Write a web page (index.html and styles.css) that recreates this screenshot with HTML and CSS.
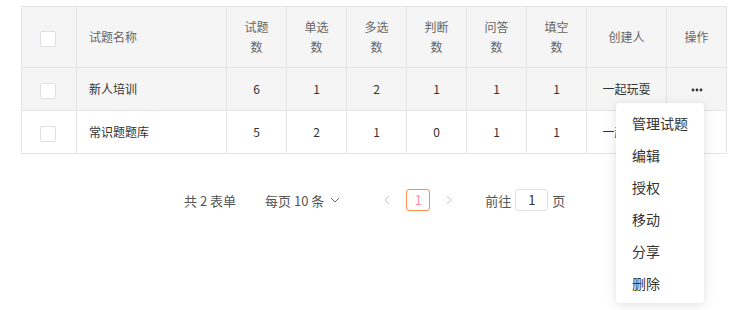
FILE: index.html
```html
<!DOCTYPE html>
<html lang="zh">
<head>
    <meta charset="utf-8">
    <title>试题库列表</title>
    <link rel="stylesheet" href="styles.css">
</head>
<body>
    <div class="page">
        <table class="bank-table">
            <colgroup>
                <col style="width:55px">
                <col style="width:150px">
                <col style="width:60px">
                <col style="width:60px">
                <col style="width:60px">
                <col style="width:60px">
                <col style="width:60px">
                <col style="width:60px">
                <col style="width:80px">
                <col style="width:60px">
            </colgroup>
            <thead>
                <tr>
                    <th><span class="check"></span></th>
                    <th class="name">试题名称</th>
                    <th>试题<br>数</th>
                    <th>单选<br>数</th>
                    <th>多选<br>数</th>
                    <th>判断<br>数</th>
                    <th>问答<br>数</th>
                    <th>填空<br>数</th>
                    <th>创建人</th>
                    <th>操作</th>
                </tr>
            </thead>
            <tbody>
                <tr class="hover">
                    <td><span class="check"></span></td>
                    <td class="name">新人培训</td>
                    <td>6</td>
                    <td>1</td>
                    <td>2</td>
                    <td>1</td>
                    <td>1</td>
                    <td>1</td>
                    <td>一起玩耍</td>
                    <td>
                        <svg class="more" width="12" height="4" viewBox="0 0 12 4">
                            <circle cx="2" cy="2" r="1.4" fill="#333"/>
                            <circle cx="6" cy="2" r="1.4" fill="#333"/>
                            <circle cx="10" cy="2" r="1.4" fill="#333"/>
                        </svg>
                    </td>
                </tr>
                <tr>
                    <td><span class="check"></span></td>
                    <td class="name">常识题题库</td>
                    <td>5</td>
                    <td>2</td>
                    <td>1</td>
                    <td>0</td>
                    <td>1</td>
                    <td>1</td>
                    <td>一起玩耍</td>
                    <td></td>
                </tr>
            </tbody>
        </table>

        <div class="pager">
            <span class="total">共 2 表单</span>
            <span class="sizes"><span class="sizes-text">每页 10 条</span><svg width="10" height="6" viewBox="0 0 10 6"><path d="M1 1l4 4 4-4" fill="none" stroke="#666" stroke-width="1"/></svg></span>
            <span class="arrow">
                <svg width="6" height="10" viewBox="0 0 6 10"><path d="M5 1L1 5l4 4" fill="none" stroke="#c0c4cc" stroke-width="1"/></svg>
            </span>
            <span class="num">1</span>
            <span class="arrow">
                <svg width="6" height="10" viewBox="0 0 6 10"><path d="M1 1l4 4-4 4" fill="none" stroke="#c0c4cc" stroke-width="1"/></svg>
            </span>
            <span class="jump">前往 <span class="jump-box">1</span> 页</span>
        </div>

        <ul class="menu">
            <li>管理试题</li>
            <li>编辑</li>
            <li>授权</li>
            <li>移动</li>
            <li>分享</li>
            <li>删除</li>
        </ul>
    </div>
</body>
</html>
```

FILE: styles.css
```css
body {
    margin: 0;
    padding: 0;
    background: #fff;
    font-family: "Noto Sans CJK SC", "Microsoft YaHei", sans-serif;
    color: #333;
}
.page {
    position: relative;
    min-height: 304px;
    padding: 6px 0 0 21px;
}
.bank-table {
    border-collapse: collapse;
    table-layout: fixed;
    width: 706px;
    font-size: 12px;
}
.bank-table th,
.bank-table td {
    border: 1px solid #e4e4e4;
    text-align: center;
    padding: 0;
}
.bank-table th {
    height: 60px;
    background: #f5f5f5;
    color: #666;
    font-weight: normal;
    line-height: 20px;
}
.bank-table td {
    height: 42px;
    line-height: 20px;
}
.bank-table tr.hover td {
    background: #f5f5f5;
}
.bank-table .name {
    text-align: left;
    padding-left: 12px;
}
.check {
    display: inline-block;
    width: 14px;
    height: 14px;
    border: 1px solid #dcdfe6;
    border-radius: 2px;
    background: #fff;
    vertical-align: middle;
    margin-left: -2px;
}
.more {
    display: inline-block;
    vertical-align: middle;
    margin-top: -2px;
}
.pager {
    display: flex;
    align-items: center;
    margin-top: 35px;
    padding-left: 163px;
    font-size: 13px;
    color: #555;
    height: 22px;
}
.total {
    margin-right: 29px;
    white-space: pre;
}
.sizes {
    display: flex;
    align-items: center;
    gap: 6px;
    margin-right: 44px;
}
.sizes-text {
    white-space: pre;
}
.arrow {
    display: flex;
    align-items: center;
}
.num {
    width: 22px;
    height: 20px;
    line-height: 20px;
    border: 1px solid #ff8a4c;
    border-radius: 3px;
    color: #f78fa7;
    text-align: center;
    margin: 0 16px;
}
.jump {
    margin-left: 33px;
    display: flex;
    align-items: center;
    gap: 4px;
}
.jump-box {
    width: 31px;
    height: 20px;
    line-height: 20px;
    border: 1px solid #dcdfe6;
    border-radius: 3px;
    text-align: center;
    color: #333;
}
.menu {
    position: absolute;
    left: 616px;
    top: 103px;
    width: 88px;
    margin: 0;
    padding: 4px 0 4px;
    list-style: none;
    background: #fff;
    border-radius: 4px;
    box-shadow: 0 2px 12px rgba(0, 0, 0, 0.12);
    font-size: 14px;
    color: #333;
}
.menu li {
    height: 32px;
    line-height: 32px;
    padding-left: 16px;
}
```
